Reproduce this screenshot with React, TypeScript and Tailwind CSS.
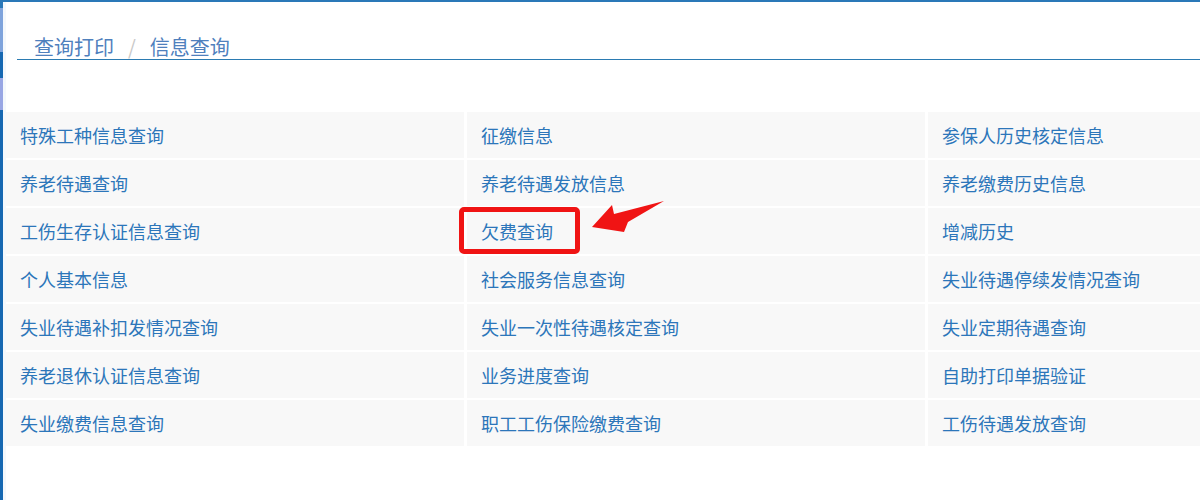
import React from 'react';

const ROWS: string[][] = [
  ['特殊工种信息查询', '征缴信息', '参保人历史核定信息'],
  ['养老待遇查询', '养老待遇发放信息', '养老缴费历史信息'],
  ['工伤生存认证信息查询', '欠费查询', '增减历史'],
  ['个人基本信息', '社会服务信息查询', '失业待遇停续发情况查询'],
  ['失业待遇补扣发情况查询', '失业一次性待遇核定查询', '失业定期待遇查询'],
  ['养老退休认证信息查询', '业务进度查询', '自助打印单据验证'],
  ['失业缴费信息查询', '职工工伤保险缴费查询', '工伤待遇发放查询'],
];

const FONT = { fontFamily: '"Microsoft YaHei", "Noto Sans CJK SC", sans-serif' };

export default function App() {
  return (
    <div className="h-[500px] w-[1200px] overflow-hidden bg-white border-t-2 border-[#2a78b8] flex" style={FONT}>
      {/* 左侧窗口边 */}
      <div className="w-[3px] flex flex-col shrink-0">
        <div className="h-[6px] bg-[#2a78b8]"></div>
        <div className="h-[44px] bg-[#7ea3dc]"></div>
        <div className="h-[26px] bg-[#1668b2]"></div>
        <div className="h-[32px] bg-[#98a6e4]"></div>
        <div className="flex-1 bg-[#1668b2]"></div>
      </div>
      <div className="w-[3px] shrink-0 bg-[#f4f8fc]"></div>

      <div className="flex-1 min-w-0 overflow-hidden">
        <div className="ml-[11px] pt-[33px] pl-[17px] border-b border-[#2b7bb2] flex items-center h-[58px] text-[20px] leading-[24px] text-[#4f80bd]">
          <span>查询打印</span>
          <span className="mx-[14px] text-[#c8c8c8]">/</span>
          <span>信息查询</span>
        </div>

        <div className="relative mt-[52px] w-max">
          <div className="grid grid-cols-[458px_458px_458px] gap-x-[3px] gap-y-[2px]">
            {ROWS.flat().map((label, i) => (
              <div key={i} className="h-[46px] bg-[#f8f8f8] flex items-center pl-[14px] text-[18px] text-[#2c76ba]">
                {label}
              </div>
            ))}
          </div>

          {/* 红框标注 */}
          <div className="absolute left-[453px] top-[95px] w-[121px] h-[47px] border-[5px] border-[#f01414] rounded-[5px]"></div>
          <svg className="absolute left-[580px] top-[85px]" width="90" height="45" viewBox="0 0 90 45">
            <polygon points="6,30 26,8 28,17 78,4 42,25 38,35" fill="#f01414" />
          </svg>
        </div>
      </div>
    </div>
  );
}
